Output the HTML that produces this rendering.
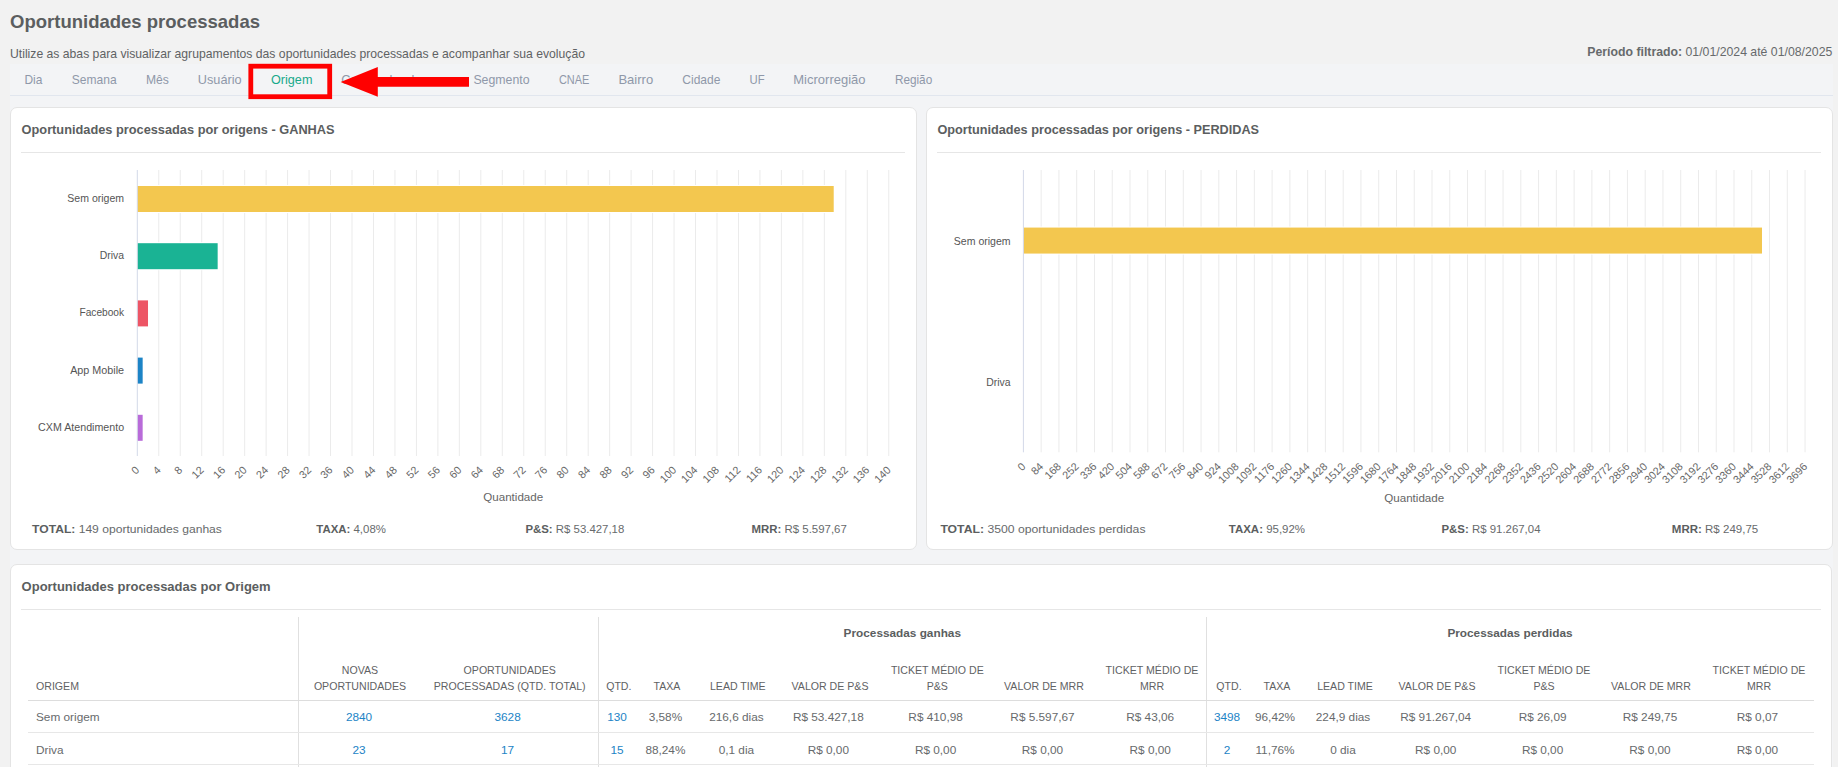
<!DOCTYPE html>
<html><head><meta charset="utf-8"><title>Oportunidades processadas</title>
<style>
html,body{margin:0;padding:0;background:#f2f2f2;}
body{width:1838px;height:767px;overflow:hidden;position:relative;font-family:"Liberation Sans", sans-serif;}
svg{position:absolute;left:0;top:0;display:block;}
svg text{font-family:"Liberation Sans", sans-serif;}
</style></head>
<body>
<svg width="1838" height="767" viewBox="0 0 1838 767">
<rect x="10" y="64" width="1823" height="703" fill="#f3f4f6" />
<text x="10" y="27.8" font-size="18.2" fill="#5b5e60" font-weight="bold" text-anchor="start" textLength="250" lengthAdjust="spacingAndGlyphs" >Oportunidades processadas</text>
<text x="10" y="58" font-size="12.4" fill="#5f6264" font-weight="normal" text-anchor="start" textLength="575" lengthAdjust="spacingAndGlyphs" >Utilize as abas para visualizar agrupamentos das oportunidades processadas e acompanhar sua evolução</text>
<text x="1832.3" y="56.3" font-size="12.6" fill="#676a6c" text-anchor="end" textLength="245" lengthAdjust="spacingAndGlyphs"><tspan font-weight="bold">Período filtrado:</tspan> 01/01/2024 até 01/08/2025</text>
<text x="24.5" y="84.2" font-size="12.8" fill="#8f98a9" font-weight="normal" text-anchor="start" textLength="17.9" lengthAdjust="spacingAndGlyphs" >Dia</text>
<text x="71.8" y="84.2" font-size="12.8" fill="#8f98a9" font-weight="normal" text-anchor="start" textLength="44.8" lengthAdjust="spacingAndGlyphs" >Semana</text>
<text x="145.9" y="84.2" font-size="12.8" fill="#8f98a9" font-weight="normal" text-anchor="start" textLength="22.9" lengthAdjust="spacingAndGlyphs" >Mês</text>
<text x="197.8" y="84.2" font-size="12.8" fill="#8f98a9" font-weight="normal" text-anchor="start" textLength="43.8" lengthAdjust="spacingAndGlyphs" >Usuário</text>
<text x="271" y="84.2" font-size="12.8" fill="#18a98b" font-weight="normal" text-anchor="start" textLength="41.4" lengthAdjust="spacingAndGlyphs" >Origem</text>
<text x="341.2" y="84.2" font-size="12.8" fill="#8f98a9" font-weight="normal" text-anchor="start" textLength="110.8" lengthAdjust="spacingAndGlyphs" >Campanha de usos</text>
<text x="473.4" y="84.2" font-size="12.8" fill="#8f98a9" font-weight="normal" text-anchor="start" textLength="56.1" lengthAdjust="spacingAndGlyphs" >Segmento</text>
<text x="558.9" y="84.2" font-size="12.8" fill="#8f98a9" font-weight="normal" text-anchor="start" textLength="30.4" lengthAdjust="spacingAndGlyphs" >CNAE</text>
<text x="618.4" y="84.2" font-size="12.8" fill="#8f98a9" font-weight="normal" text-anchor="start" textLength="34.8" lengthAdjust="spacingAndGlyphs" >Bairro</text>
<text x="682.3" y="84.2" font-size="12.8" fill="#8f98a9" font-weight="normal" text-anchor="start" textLength="38.1" lengthAdjust="spacingAndGlyphs" >Cidade</text>
<text x="749.5" y="84.2" font-size="12.8" fill="#8f98a9" font-weight="normal" text-anchor="start" textLength="15.1" lengthAdjust="spacingAndGlyphs" >UF</text>
<text x="793.3" y="84.2" font-size="12.8" fill="#8f98a9" font-weight="normal" text-anchor="start" textLength="72.2" lengthAdjust="spacingAndGlyphs" >Microrregião</text>
<text x="894.9" y="84.2" font-size="12.8" fill="#8f98a9" font-weight="normal" text-anchor="start" textLength="37.3" lengthAdjust="spacingAndGlyphs" >Região</text>
<rect x="10" y="95" width="1823" height="1" fill="#e1e6ee"/>
<rect x="10.5" y="107.5" width="906" height="442" rx="6.5" ry="6.5" fill="#ffffff" stroke="#e4e4e4" stroke-width="1"/>
<rect x="926.5" y="107.5" width="906" height="442" rx="6.5" ry="6.5" fill="#ffffff" stroke="#e4e4e4" stroke-width="1"/>
<rect x="10.5" y="564.5" width="1821" height="259" rx="6.5" ry="6.5" fill="#ffffff" stroke="#e4e4e4" stroke-width="1"/>
<text x="21.6" y="133.8" font-size="12.6" fill="#5b5e60" font-weight="bold" text-anchor="start" textLength="313" lengthAdjust="spacingAndGlyphs" >Oportunidades processadas por origens - GANHAS</text>
<rect x="21" y="152" width="884" height="1" fill="#e6e6e6"/>
<text x="937.4" y="133.8" font-size="12.6" fill="#5b5e60" font-weight="bold" text-anchor="start" textLength="321.7" lengthAdjust="spacingAndGlyphs" >Oportunidades processadas por origens - PERDIDAS</text>
<rect x="937" y="152" width="884" height="1" fill="#e6e6e6"/>
<rect x="158.27" y="170" width="1" height="286" fill="#ebebeb"/>
<rect x="179.74" y="170" width="1" height="286" fill="#ebebeb"/>
<rect x="201.21" y="170" width="1" height="286" fill="#ebebeb"/>
<rect x="222.68" y="170" width="1" height="286" fill="#ebebeb"/>
<rect x="244.15" y="170" width="1" height="286" fill="#ebebeb"/>
<rect x="265.62" y="170" width="1" height="286" fill="#ebebeb"/>
<rect x="287.09" y="170" width="1" height="286" fill="#ebebeb"/>
<rect x="308.56" y="170" width="1" height="286" fill="#ebebeb"/>
<rect x="330.03" y="170" width="1" height="286" fill="#ebebeb"/>
<rect x="351.5" y="170" width="1" height="286" fill="#ebebeb"/>
<rect x="372.97" y="170" width="1" height="286" fill="#ebebeb"/>
<rect x="394.44" y="170" width="1" height="286" fill="#ebebeb"/>
<rect x="415.91" y="170" width="1" height="286" fill="#ebebeb"/>
<rect x="437.38" y="170" width="1" height="286" fill="#ebebeb"/>
<rect x="458.85" y="170" width="1" height="286" fill="#ebebeb"/>
<rect x="480.32" y="170" width="1" height="286" fill="#ebebeb"/>
<rect x="501.79" y="170" width="1" height="286" fill="#ebebeb"/>
<rect x="523.26" y="170" width="1" height="286" fill="#ebebeb"/>
<rect x="544.73" y="170" width="1" height="286" fill="#ebebeb"/>
<rect x="566.2" y="170" width="1" height="286" fill="#ebebeb"/>
<rect x="587.67" y="170" width="1" height="286" fill="#ebebeb"/>
<rect x="609.14" y="170" width="1" height="286" fill="#ebebeb"/>
<rect x="630.61" y="170" width="1" height="286" fill="#ebebeb"/>
<rect x="652.08" y="170" width="1" height="286" fill="#ebebeb"/>
<rect x="673.55" y="170" width="1" height="286" fill="#ebebeb"/>
<rect x="695.02" y="170" width="1" height="286" fill="#ebebeb"/>
<rect x="716.49" y="170" width="1" height="286" fill="#ebebeb"/>
<rect x="737.96" y="170" width="1" height="286" fill="#ebebeb"/>
<rect x="759.43" y="170" width="1" height="286" fill="#ebebeb"/>
<rect x="780.9" y="170" width="1" height="286" fill="#ebebeb"/>
<rect x="802.37" y="170" width="1" height="286" fill="#ebebeb"/>
<rect x="823.84" y="170" width="1" height="286" fill="#ebebeb"/>
<rect x="845.31" y="170" width="1" height="286" fill="#ebebeb"/>
<rect x="866.78" y="170" width="1" height="286" fill="#ebebeb"/>
<rect x="888.25" y="170" width="1" height="286" fill="#ebebeb"/>
<rect x="137.8" y="185.0" width="697.41" height="28" fill="#ffffff" />
<rect x="137.3" y="186.0" width="696.41" height="26" fill="#f3c74f" />
<text x="124.1" y="202.0" font-size="10.2" fill="#555555" font-weight="normal" text-anchor="end" textLength="56.8" lengthAdjust="spacingAndGlyphs" >Sem origem</text>
<rect x="137.8" y="242.2" width="81.36" height="28" fill="#ffffff" />
<rect x="137.3" y="243.2" width="80.36" height="26" fill="#1ab394" />
<text x="124.1" y="259.2" font-size="10.2" fill="#555555" font-weight="normal" text-anchor="end" textLength="24.3" lengthAdjust="spacingAndGlyphs" >Driva</text>
<rect x="137.8" y="299.4" width="11.71" height="28" fill="#ffffff" />
<rect x="137.3" y="300.4" width="10.71" height="26" fill="#ed5565" />
<text x="124.1" y="316.4" font-size="10.2" fill="#555555" font-weight="normal" text-anchor="end" textLength="44.6" lengthAdjust="spacingAndGlyphs" >Facebook</text>
<rect x="137.8" y="356.6" width="6.36" height="28" fill="#ffffff" />
<rect x="137.3" y="357.6" width="5.36" height="26" fill="#1c84c6" />
<text x="124.1" y="373.6" font-size="10.2" fill="#555555" font-weight="normal" text-anchor="end" textLength="53.9" lengthAdjust="spacingAndGlyphs" >App Mobile</text>
<rect x="137.8" y="413.8" width="6.36" height="28" fill="#ffffff" />
<rect x="137.3" y="414.8" width="5.36" height="26" fill="#b96bd9" />
<text x="124.1" y="430.8" font-size="10.2" fill="#555555" font-weight="normal" text-anchor="end" textLength="86" lengthAdjust="spacingAndGlyphs" >CXM Atendimento</text>
<rect x="136.8" y="170" width="1" height="286" fill="#d3d9e8"/>
<text x="0" y="0" font-size="10.8" fill="#666666" text-anchor="end" dominant-baseline="central" transform="translate(137.30,468) rotate(-45)">0</text>
<text x="0" y="0" font-size="10.8" fill="#666666" text-anchor="end" dominant-baseline="central" transform="translate(158.77,468) rotate(-45)">4</text>
<text x="0" y="0" font-size="10.8" fill="#666666" text-anchor="end" dominant-baseline="central" transform="translate(180.24,468) rotate(-45)">8</text>
<text x="0" y="0" font-size="10.8" fill="#666666" text-anchor="end" dominant-baseline="central" transform="translate(201.71,468) rotate(-45)">12</text>
<text x="0" y="0" font-size="10.8" fill="#666666" text-anchor="end" dominant-baseline="central" transform="translate(223.18,468) rotate(-45)">16</text>
<text x="0" y="0" font-size="10.8" fill="#666666" text-anchor="end" dominant-baseline="central" transform="translate(244.65,468) rotate(-45)">20</text>
<text x="0" y="0" font-size="10.8" fill="#666666" text-anchor="end" dominant-baseline="central" transform="translate(266.12,468) rotate(-45)">24</text>
<text x="0" y="0" font-size="10.8" fill="#666666" text-anchor="end" dominant-baseline="central" transform="translate(287.59,468) rotate(-45)">28</text>
<text x="0" y="0" font-size="10.8" fill="#666666" text-anchor="end" dominant-baseline="central" transform="translate(309.06,468) rotate(-45)">32</text>
<text x="0" y="0" font-size="10.8" fill="#666666" text-anchor="end" dominant-baseline="central" transform="translate(330.53,468) rotate(-45)">36</text>
<text x="0" y="0" font-size="10.8" fill="#666666" text-anchor="end" dominant-baseline="central" transform="translate(352.00,468) rotate(-45)">40</text>
<text x="0" y="0" font-size="10.8" fill="#666666" text-anchor="end" dominant-baseline="central" transform="translate(373.47,468) rotate(-45)">44</text>
<text x="0" y="0" font-size="10.8" fill="#666666" text-anchor="end" dominant-baseline="central" transform="translate(394.94,468) rotate(-45)">48</text>
<text x="0" y="0" font-size="10.8" fill="#666666" text-anchor="end" dominant-baseline="central" transform="translate(416.41,468) rotate(-45)">52</text>
<text x="0" y="0" font-size="10.8" fill="#666666" text-anchor="end" dominant-baseline="central" transform="translate(437.88,468) rotate(-45)">56</text>
<text x="0" y="0" font-size="10.8" fill="#666666" text-anchor="end" dominant-baseline="central" transform="translate(459.35,468) rotate(-45)">60</text>
<text x="0" y="0" font-size="10.8" fill="#666666" text-anchor="end" dominant-baseline="central" transform="translate(480.82,468) rotate(-45)">64</text>
<text x="0" y="0" font-size="10.8" fill="#666666" text-anchor="end" dominant-baseline="central" transform="translate(502.29,468) rotate(-45)">68</text>
<text x="0" y="0" font-size="10.8" fill="#666666" text-anchor="end" dominant-baseline="central" transform="translate(523.76,468) rotate(-45)">72</text>
<text x="0" y="0" font-size="10.8" fill="#666666" text-anchor="end" dominant-baseline="central" transform="translate(545.23,468) rotate(-45)">76</text>
<text x="0" y="0" font-size="10.8" fill="#666666" text-anchor="end" dominant-baseline="central" transform="translate(566.70,468) rotate(-45)">80</text>
<text x="0" y="0" font-size="10.8" fill="#666666" text-anchor="end" dominant-baseline="central" transform="translate(588.17,468) rotate(-45)">84</text>
<text x="0" y="0" font-size="10.8" fill="#666666" text-anchor="end" dominant-baseline="central" transform="translate(609.64,468) rotate(-45)">88</text>
<text x="0" y="0" font-size="10.8" fill="#666666" text-anchor="end" dominant-baseline="central" transform="translate(631.11,468) rotate(-45)">92</text>
<text x="0" y="0" font-size="10.8" fill="#666666" text-anchor="end" dominant-baseline="central" transform="translate(652.58,468) rotate(-45)">96</text>
<text x="0" y="0" font-size="10.8" fill="#666666" text-anchor="end" dominant-baseline="central" transform="translate(674.05,468) rotate(-45)">100</text>
<text x="0" y="0" font-size="10.8" fill="#666666" text-anchor="end" dominant-baseline="central" transform="translate(695.52,468) rotate(-45)">104</text>
<text x="0" y="0" font-size="10.8" fill="#666666" text-anchor="end" dominant-baseline="central" transform="translate(716.99,468) rotate(-45)">108</text>
<text x="0" y="0" font-size="10.8" fill="#666666" text-anchor="end" dominant-baseline="central" transform="translate(738.46,468) rotate(-45)">112</text>
<text x="0" y="0" font-size="10.8" fill="#666666" text-anchor="end" dominant-baseline="central" transform="translate(759.93,468) rotate(-45)">116</text>
<text x="0" y="0" font-size="10.8" fill="#666666" text-anchor="end" dominant-baseline="central" transform="translate(781.40,468) rotate(-45)">120</text>
<text x="0" y="0" font-size="10.8" fill="#666666" text-anchor="end" dominant-baseline="central" transform="translate(802.87,468) rotate(-45)">124</text>
<text x="0" y="0" font-size="10.8" fill="#666666" text-anchor="end" dominant-baseline="central" transform="translate(824.34,468) rotate(-45)">128</text>
<text x="0" y="0" font-size="10.8" fill="#666666" text-anchor="end" dominant-baseline="central" transform="translate(845.81,468) rotate(-45)">132</text>
<text x="0" y="0" font-size="10.8" fill="#666666" text-anchor="end" dominant-baseline="central" transform="translate(867.28,468) rotate(-45)">136</text>
<text x="0" y="0" font-size="10.8" fill="#666666" text-anchor="end" dominant-baseline="central" transform="translate(888.75,468) rotate(-45)">140</text>
<text x="513.2" y="500.9" font-size="11.6" fill="#666666" font-weight="normal" text-anchor="middle" >Quantidade</text>
<rect x="1040.66" y="170" width="1" height="282.3" fill="#ebebeb"/>
<rect x="1058.43" y="170" width="1" height="282.3" fill="#ebebeb"/>
<rect x="1076.19" y="170" width="1" height="282.3" fill="#ebebeb"/>
<rect x="1093.96" y="170" width="1" height="282.3" fill="#ebebeb"/>
<rect x="1111.72" y="170" width="1" height="282.3" fill="#ebebeb"/>
<rect x="1129.49" y="170" width="1" height="282.3" fill="#ebebeb"/>
<rect x="1147.25" y="170" width="1" height="282.3" fill="#ebebeb"/>
<rect x="1165.02" y="170" width="1" height="282.3" fill="#ebebeb"/>
<rect x="1182.78" y="170" width="1" height="282.3" fill="#ebebeb"/>
<rect x="1200.55" y="170" width="1" height="282.3" fill="#ebebeb"/>
<rect x="1218.32" y="170" width="1" height="282.3" fill="#ebebeb"/>
<rect x="1236.08" y="170" width="1" height="282.3" fill="#ebebeb"/>
<rect x="1253.85" y="170" width="1" height="282.3" fill="#ebebeb"/>
<rect x="1271.61" y="170" width="1" height="282.3" fill="#ebebeb"/>
<rect x="1289.38" y="170" width="1" height="282.3" fill="#ebebeb"/>
<rect x="1307.14" y="170" width="1" height="282.3" fill="#ebebeb"/>
<rect x="1324.9" y="170" width="1" height="282.3" fill="#ebebeb"/>
<rect x="1342.67" y="170" width="1" height="282.3" fill="#ebebeb"/>
<rect x="1360.43" y="170" width="1" height="282.3" fill="#ebebeb"/>
<rect x="1378.2" y="170" width="1" height="282.3" fill="#ebebeb"/>
<rect x="1395.96" y="170" width="1" height="282.3" fill="#ebebeb"/>
<rect x="1413.73" y="170" width="1" height="282.3" fill="#ebebeb"/>
<rect x="1431.49" y="170" width="1" height="282.3" fill="#ebebeb"/>
<rect x="1449.26" y="170" width="1" height="282.3" fill="#ebebeb"/>
<rect x="1467.03" y="170" width="1" height="282.3" fill="#ebebeb"/>
<rect x="1484.79" y="170" width="1" height="282.3" fill="#ebebeb"/>
<rect x="1502.56" y="170" width="1" height="282.3" fill="#ebebeb"/>
<rect x="1520.32" y="170" width="1" height="282.3" fill="#ebebeb"/>
<rect x="1538.09" y="170" width="1" height="282.3" fill="#ebebeb"/>
<rect x="1555.85" y="170" width="1" height="282.3" fill="#ebebeb"/>
<rect x="1573.62" y="170" width="1" height="282.3" fill="#ebebeb"/>
<rect x="1591.38" y="170" width="1" height="282.3" fill="#ebebeb"/>
<rect x="1609.14" y="170" width="1" height="282.3" fill="#ebebeb"/>
<rect x="1626.91" y="170" width="1" height="282.3" fill="#ebebeb"/>
<rect x="1644.67" y="170" width="1" height="282.3" fill="#ebebeb"/>
<rect x="1662.44" y="170" width="1" height="282.3" fill="#ebebeb"/>
<rect x="1680.2" y="170" width="1" height="282.3" fill="#ebebeb"/>
<rect x="1697.97" y="170" width="1" height="282.3" fill="#ebebeb"/>
<rect x="1715.74" y="170" width="1" height="282.3" fill="#ebebeb"/>
<rect x="1733.5" y="170" width="1" height="282.3" fill="#ebebeb"/>
<rect x="1751.26" y="170" width="1" height="282.3" fill="#ebebeb"/>
<rect x="1769.03" y="170" width="1" height="282.3" fill="#ebebeb"/>
<rect x="1786.8" y="170" width="1" height="282.3" fill="#ebebeb"/>
<rect x="1804.56" y="170" width="1" height="282.3" fill="#ebebeb"/>
<rect x="1023.9" y="226.57" width="739.59" height="28" fill="#ffffff" />
<rect x="1023.4" y="227.57" width="738.59" height="26" fill="#f3c74f" />
<text x="1010.6" y="244.88" font-size="10.2" fill="#555555" font-weight="normal" text-anchor="end" textLength="56.8" lengthAdjust="spacingAndGlyphs" >Sem origem</text>
<rect x="1023.9" y="367.73" width="0.21999999999999997" height="28" fill="#ffffff" />
<rect x="1023.4" y="368.73" width="-0.78" height="26" fill="#1ab394" />
<text x="1010.6" y="386.03" font-size="10.2" fill="#555555" font-weight="normal" text-anchor="end" textLength="24.3" lengthAdjust="spacingAndGlyphs" >Driva</text>
<rect x="1022.9" y="170" width="1" height="282.3" fill="#d3d9e8"/>
<text x="0" y="0" font-size="10.8" fill="#666666" text-anchor="end" dominant-baseline="central" transform="translate(1023.40,464.3) rotate(-45)">0</text>
<text x="0" y="0" font-size="10.8" fill="#666666" text-anchor="end" dominant-baseline="central" transform="translate(1041.16,464.3) rotate(-45)">84</text>
<text x="0" y="0" font-size="10.8" fill="#666666" text-anchor="end" dominant-baseline="central" transform="translate(1058.93,464.3) rotate(-45)">168</text>
<text x="0" y="0" font-size="10.8" fill="#666666" text-anchor="end" dominant-baseline="central" transform="translate(1076.69,464.3) rotate(-45)">252</text>
<text x="0" y="0" font-size="10.8" fill="#666666" text-anchor="end" dominant-baseline="central" transform="translate(1094.46,464.3) rotate(-45)">336</text>
<text x="0" y="0" font-size="10.8" fill="#666666" text-anchor="end" dominant-baseline="central" transform="translate(1112.22,464.3) rotate(-45)">420</text>
<text x="0" y="0" font-size="10.8" fill="#666666" text-anchor="end" dominant-baseline="central" transform="translate(1129.99,464.3) rotate(-45)">504</text>
<text x="0" y="0" font-size="10.8" fill="#666666" text-anchor="end" dominant-baseline="central" transform="translate(1147.75,464.3) rotate(-45)">588</text>
<text x="0" y="0" font-size="10.8" fill="#666666" text-anchor="end" dominant-baseline="central" transform="translate(1165.52,464.3) rotate(-45)">672</text>
<text x="0" y="0" font-size="10.8" fill="#666666" text-anchor="end" dominant-baseline="central" transform="translate(1183.28,464.3) rotate(-45)">756</text>
<text x="0" y="0" font-size="10.8" fill="#666666" text-anchor="end" dominant-baseline="central" transform="translate(1201.05,464.3) rotate(-45)">840</text>
<text x="0" y="0" font-size="10.8" fill="#666666" text-anchor="end" dominant-baseline="central" transform="translate(1218.82,464.3) rotate(-45)">924</text>
<text x="0" y="0" font-size="10.8" fill="#666666" text-anchor="end" dominant-baseline="central" transform="translate(1236.58,464.3) rotate(-45)">1008</text>
<text x="0" y="0" font-size="10.8" fill="#666666" text-anchor="end" dominant-baseline="central" transform="translate(1254.35,464.3) rotate(-45)">1092</text>
<text x="0" y="0" font-size="10.8" fill="#666666" text-anchor="end" dominant-baseline="central" transform="translate(1272.11,464.3) rotate(-45)">1176</text>
<text x="0" y="0" font-size="10.8" fill="#666666" text-anchor="end" dominant-baseline="central" transform="translate(1289.88,464.3) rotate(-45)">1260</text>
<text x="0" y="0" font-size="10.8" fill="#666666" text-anchor="end" dominant-baseline="central" transform="translate(1307.64,464.3) rotate(-45)">1344</text>
<text x="0" y="0" font-size="10.8" fill="#666666" text-anchor="end" dominant-baseline="central" transform="translate(1325.40,464.3) rotate(-45)">1428</text>
<text x="0" y="0" font-size="10.8" fill="#666666" text-anchor="end" dominant-baseline="central" transform="translate(1343.17,464.3) rotate(-45)">1512</text>
<text x="0" y="0" font-size="10.8" fill="#666666" text-anchor="end" dominant-baseline="central" transform="translate(1360.93,464.3) rotate(-45)">1596</text>
<text x="0" y="0" font-size="10.8" fill="#666666" text-anchor="end" dominant-baseline="central" transform="translate(1378.70,464.3) rotate(-45)">1680</text>
<text x="0" y="0" font-size="10.8" fill="#666666" text-anchor="end" dominant-baseline="central" transform="translate(1396.46,464.3) rotate(-45)">1764</text>
<text x="0" y="0" font-size="10.8" fill="#666666" text-anchor="end" dominant-baseline="central" transform="translate(1414.23,464.3) rotate(-45)">1848</text>
<text x="0" y="0" font-size="10.8" fill="#666666" text-anchor="end" dominant-baseline="central" transform="translate(1431.99,464.3) rotate(-45)">1932</text>
<text x="0" y="0" font-size="10.8" fill="#666666" text-anchor="end" dominant-baseline="central" transform="translate(1449.76,464.3) rotate(-45)">2016</text>
<text x="0" y="0" font-size="10.8" fill="#666666" text-anchor="end" dominant-baseline="central" transform="translate(1467.53,464.3) rotate(-45)">2100</text>
<text x="0" y="0" font-size="10.8" fill="#666666" text-anchor="end" dominant-baseline="central" transform="translate(1485.29,464.3) rotate(-45)">2184</text>
<text x="0" y="0" font-size="10.8" fill="#666666" text-anchor="end" dominant-baseline="central" transform="translate(1503.06,464.3) rotate(-45)">2268</text>
<text x="0" y="0" font-size="10.8" fill="#666666" text-anchor="end" dominant-baseline="central" transform="translate(1520.82,464.3) rotate(-45)">2352</text>
<text x="0" y="0" font-size="10.8" fill="#666666" text-anchor="end" dominant-baseline="central" transform="translate(1538.59,464.3) rotate(-45)">2436</text>
<text x="0" y="0" font-size="10.8" fill="#666666" text-anchor="end" dominant-baseline="central" transform="translate(1556.35,464.3) rotate(-45)">2520</text>
<text x="0" y="0" font-size="10.8" fill="#666666" text-anchor="end" dominant-baseline="central" transform="translate(1574.12,464.3) rotate(-45)">2604</text>
<text x="0" y="0" font-size="10.8" fill="#666666" text-anchor="end" dominant-baseline="central" transform="translate(1591.88,464.3) rotate(-45)">2688</text>
<text x="0" y="0" font-size="10.8" fill="#666666" text-anchor="end" dominant-baseline="central" transform="translate(1609.64,464.3) rotate(-45)">2772</text>
<text x="0" y="0" font-size="10.8" fill="#666666" text-anchor="end" dominant-baseline="central" transform="translate(1627.41,464.3) rotate(-45)">2856</text>
<text x="0" y="0" font-size="10.8" fill="#666666" text-anchor="end" dominant-baseline="central" transform="translate(1645.17,464.3) rotate(-45)">2940</text>
<text x="0" y="0" font-size="10.8" fill="#666666" text-anchor="end" dominant-baseline="central" transform="translate(1662.94,464.3) rotate(-45)">3024</text>
<text x="0" y="0" font-size="10.8" fill="#666666" text-anchor="end" dominant-baseline="central" transform="translate(1680.70,464.3) rotate(-45)">3108</text>
<text x="0" y="0" font-size="10.8" fill="#666666" text-anchor="end" dominant-baseline="central" transform="translate(1698.47,464.3) rotate(-45)">3192</text>
<text x="0" y="0" font-size="10.8" fill="#666666" text-anchor="end" dominant-baseline="central" transform="translate(1716.24,464.3) rotate(-45)">3276</text>
<text x="0" y="0" font-size="10.8" fill="#666666" text-anchor="end" dominant-baseline="central" transform="translate(1734.00,464.3) rotate(-45)">3360</text>
<text x="0" y="0" font-size="10.8" fill="#666666" text-anchor="end" dominant-baseline="central" transform="translate(1751.76,464.3) rotate(-45)">3444</text>
<text x="0" y="0" font-size="10.8" fill="#666666" text-anchor="end" dominant-baseline="central" transform="translate(1769.53,464.3) rotate(-45)">3528</text>
<text x="0" y="0" font-size="10.8" fill="#666666" text-anchor="end" dominant-baseline="central" transform="translate(1787.30,464.3) rotate(-45)">3612</text>
<text x="0" y="0" font-size="10.8" fill="#666666" text-anchor="end" dominant-baseline="central" transform="translate(1805.06,464.3) rotate(-45)">3696</text>
<text x="1414.2" y="501.5" font-size="11.6" fill="#666666" font-weight="normal" text-anchor="middle" >Quantidade</text>
<text x="32.1" y="533.4" font-size="11.7" fill="#676a6c" textLength="189.8" lengthAdjust="spacingAndGlyphs"><tspan font-weight="bold" fill="#5b5e60">TOTAL:</tspan> 149 oportunidades ganhas</text>
<text x="316.3" y="533.4" font-size="11.7" fill="#676a6c" textLength="69.6" lengthAdjust="spacingAndGlyphs"><tspan font-weight="bold" fill="#5b5e60">TAXA:</tspan> 4,08%</text>
<text x="525.4" y="533.4" font-size="11.7" fill="#676a6c" textLength="98.9" lengthAdjust="spacingAndGlyphs"><tspan font-weight="bold" fill="#5b5e60">P&amp;S:</tspan> R$ 53.427,18</text>
<text x="751.5" y="533.4" font-size="11.7" fill="#676a6c" textLength="95.3" lengthAdjust="spacingAndGlyphs"><tspan font-weight="bold" fill="#5b5e60">MRR:</tspan> R$ 5.597,67</text>
<text x="940.4" y="533.4" font-size="11.7" fill="#676a6c" textLength="205.1" lengthAdjust="spacingAndGlyphs"><tspan font-weight="bold" fill="#5b5e60">TOTAL:</tspan> 3500 oportunidades perdidas</text>
<text x="1228.8" y="533.4" font-size="11.7" fill="#676a6c" textLength="76.2" lengthAdjust="spacingAndGlyphs"><tspan font-weight="bold" fill="#5b5e60">TAXA:</tspan> 95,92%</text>
<text x="1441.5" y="533.4" font-size="11.7" fill="#676a6c" textLength="99.0" lengthAdjust="spacingAndGlyphs"><tspan font-weight="bold" fill="#5b5e60">P&amp;S:</tspan> R$ 91.267,04</text>
<text x="1671.8" y="533.4" font-size="11.7" fill="#676a6c" textLength="86.4" lengthAdjust="spacingAndGlyphs"><tspan font-weight="bold" fill="#5b5e60">MRR:</tspan> R$ 249,75</text>
<text x="21.6" y="591.1" font-size="12.6" fill="#5b5e60" font-weight="bold" text-anchor="start" textLength="249" lengthAdjust="spacingAndGlyphs" >Oportunidades processadas por Origem</text>
<rect x="21" y="609" width="1800" height="1" fill="#e6e6e6"/>
<rect x="298" y="617" width="1" height="150" fill="#e0e0e0"/>
<rect x="598" y="617" width="1" height="150" fill="#e0e0e0"/>
<rect x="1206" y="617" width="1" height="150" fill="#e0e0e0"/>
<rect x="28" y="700" width="1786" height="1" fill="#dddddd"/>
<rect x="28" y="732" width="1786" height="1" fill="#e7e7e7"/>
<rect x="28" y="764" width="1786" height="1" fill="#e7e7e7"/>
<text x="902.3" y="637" font-size="11.8" fill="#5b5e60" font-weight="bold" text-anchor="middle" >Processadas ganhas</text>
<text x="1510" y="637" font-size="11.8" fill="#5b5e60" font-weight="bold" text-anchor="middle" >Processadas perdidas</text>
<text x="36" y="690.3" font-size="10.6" fill="#5f6264" font-weight="normal" text-anchor="start" >ORIGEM</text>
<text x="360" y="674.1" font-size="10.6" fill="#5f6264" font-weight="normal" text-anchor="middle" >NOVAS</text>
<text x="360" y="690.3" font-size="10.6" fill="#5f6264" font-weight="normal" text-anchor="middle" >OPORTUNIDADES</text>
<text x="509.7" y="674.1" font-size="10.6" fill="#5f6264" font-weight="normal" text-anchor="middle" >OPORTUNIDADES</text>
<text x="509.7" y="690.3" font-size="10.6" fill="#5f6264" font-weight="normal" text-anchor="middle" >PROCESSADAS (QTD. TOTAL)</text>
<text x="618.8" y="690.3" font-size="10.6" fill="#5f6264" font-weight="normal" text-anchor="middle" >QTD.</text>
<text x="667" y="690.3" font-size="10.6" fill="#5f6264" font-weight="normal" text-anchor="middle" >TAXA</text>
<text x="737.8" y="690.3" font-size="10.6" fill="#5f6264" font-weight="normal" text-anchor="middle" >LEAD TIME</text>
<text x="830" y="690.3" font-size="10.6" fill="#5f6264" font-weight="normal" text-anchor="middle" >VALOR DE P&amp;S</text>
<text x="937.3" y="674.1" font-size="10.6" fill="#5f6264" font-weight="normal" text-anchor="middle" >TICKET MÉDIO DE</text>
<text x="937.3" y="690.3" font-size="10.6" fill="#5f6264" font-weight="normal" text-anchor="middle" >P&amp;S</text>
<text x="1044" y="690.3" font-size="10.6" fill="#5f6264" font-weight="normal" text-anchor="middle" >VALOR DE MRR</text>
<text x="1152" y="674.1" font-size="10.6" fill="#5f6264" font-weight="normal" text-anchor="middle" >TICKET MÉDIO DE</text>
<text x="1152" y="690.3" font-size="10.6" fill="#5f6264" font-weight="normal" text-anchor="middle" >MRR</text>
<text x="1229" y="690.3" font-size="10.6" fill="#5f6264" font-weight="normal" text-anchor="middle" >QTD.</text>
<text x="1277" y="690.3" font-size="10.6" fill="#5f6264" font-weight="normal" text-anchor="middle" >TAXA</text>
<text x="1345" y="690.3" font-size="10.6" fill="#5f6264" font-weight="normal" text-anchor="middle" >LEAD TIME</text>
<text x="1437" y="690.3" font-size="10.6" fill="#5f6264" font-weight="normal" text-anchor="middle" >VALOR DE P&amp;S</text>
<text x="1544" y="674.1" font-size="10.6" fill="#5f6264" font-weight="normal" text-anchor="middle" >TICKET MÉDIO DE</text>
<text x="1544" y="690.3" font-size="10.6" fill="#5f6264" font-weight="normal" text-anchor="middle" >P&amp;S</text>
<text x="1651" y="690.3" font-size="10.6" fill="#5f6264" font-weight="normal" text-anchor="middle" >VALOR DE MRR</text>
<text x="1759" y="674.1" font-size="10.6" fill="#5f6264" font-weight="normal" text-anchor="middle" >TICKET MÉDIO DE</text>
<text x="1759" y="690.3" font-size="10.6" fill="#5f6264" font-weight="normal" text-anchor="middle" >MRR</text>
<text x="36" y="721.3" font-size="11.8" fill="#676a6c" font-weight="normal" text-anchor="start" >Sem origem</text>
<text x="359" y="721.3" font-size="11.8" fill="#1c84c6" font-weight="normal" text-anchor="middle" >2840</text>
<text x="507.6" y="721.3" font-size="11.8" fill="#1c84c6" font-weight="normal" text-anchor="middle" >3628</text>
<text x="617" y="721.3" font-size="11.8" fill="#1c84c6" font-weight="normal" text-anchor="middle" >130</text>
<text x="665.4" y="721.3" font-size="11.8" fill="#676a6c" font-weight="normal" text-anchor="middle" >3,58%</text>
<text x="736.4" y="721.3" font-size="11.8" fill="#676a6c" font-weight="normal" text-anchor="middle" >216,6 dias</text>
<text x="828.3" y="721.3" font-size="11.8" fill="#676a6c" font-weight="normal" text-anchor="middle" >R$ 53.427,18</text>
<text x="935.6" y="721.3" font-size="11.8" fill="#676a6c" font-weight="normal" text-anchor="middle" >R$ 410,98</text>
<text x="1042.5" y="721.3" font-size="11.8" fill="#676a6c" font-weight="normal" text-anchor="middle" >R$ 5.597,67</text>
<text x="1150.2" y="721.3" font-size="11.8" fill="#676a6c" font-weight="normal" text-anchor="middle" >R$ 43,06</text>
<text x="1227" y="721.3" font-size="11.8" fill="#1c84c6" font-weight="normal" text-anchor="middle" >3498</text>
<text x="1275" y="721.3" font-size="11.8" fill="#676a6c" font-weight="normal" text-anchor="middle" >96,42%</text>
<text x="1343" y="721.3" font-size="11.8" fill="#676a6c" font-weight="normal" text-anchor="middle" >224,9 dias</text>
<text x="1435.7" y="721.3" font-size="11.8" fill="#676a6c" font-weight="normal" text-anchor="middle" >R$ 91.267,04</text>
<text x="1542.6" y="721.3" font-size="11.8" fill="#676a6c" font-weight="normal" text-anchor="middle" >R$ 26,09</text>
<text x="1650" y="721.3" font-size="11.8" fill="#676a6c" font-weight="normal" text-anchor="middle" >R$ 249,75</text>
<text x="1757.4" y="721.3" font-size="11.8" fill="#676a6c" font-weight="normal" text-anchor="middle" >R$ 0,07</text>
<text x="36" y="754.4" font-size="11.8" fill="#676a6c" font-weight="normal" text-anchor="start" >Driva</text>
<text x="359" y="754.4" font-size="11.8" fill="#1c84c6" font-weight="normal" text-anchor="middle" >23</text>
<text x="507.6" y="754.4" font-size="11.8" fill="#1c84c6" font-weight="normal" text-anchor="middle" >17</text>
<text x="617" y="754.4" font-size="11.8" fill="#1c84c6" font-weight="normal" text-anchor="middle" >15</text>
<text x="665.4" y="754.4" font-size="11.8" fill="#676a6c" font-weight="normal" text-anchor="middle" >88,24%</text>
<text x="736.4" y="754.4" font-size="11.8" fill="#676a6c" font-weight="normal" text-anchor="middle" >0,1 dia</text>
<text x="828.3" y="754.4" font-size="11.8" fill="#676a6c" font-weight="normal" text-anchor="middle" >R$ 0,00</text>
<text x="935.6" y="754.4" font-size="11.8" fill="#676a6c" font-weight="normal" text-anchor="middle" >R$ 0,00</text>
<text x="1042.5" y="754.4" font-size="11.8" fill="#676a6c" font-weight="normal" text-anchor="middle" >R$ 0,00</text>
<text x="1150.2" y="754.4" font-size="11.8" fill="#676a6c" font-weight="normal" text-anchor="middle" >R$ 0,00</text>
<text x="1227" y="754.4" font-size="11.8" fill="#1c84c6" font-weight="normal" text-anchor="middle" >2</text>
<text x="1275" y="754.4" font-size="11.8" fill="#676a6c" font-weight="normal" text-anchor="middle" >11,76%</text>
<text x="1343" y="754.4" font-size="11.8" fill="#676a6c" font-weight="normal" text-anchor="middle" >0 dia</text>
<text x="1435.7" y="754.4" font-size="11.8" fill="#676a6c" font-weight="normal" text-anchor="middle" >R$ 0,00</text>
<text x="1542.6" y="754.4" font-size="11.8" fill="#676a6c" font-weight="normal" text-anchor="middle" >R$ 0,00</text>
<text x="1650" y="754.4" font-size="11.8" fill="#676a6c" font-weight="normal" text-anchor="middle" >R$ 0,00</text>
<text x="1757.4" y="754.4" font-size="11.8" fill="#676a6c" font-weight="normal" text-anchor="middle" >R$ 0,00</text>
<rect x="250.8" y="66.2" width="78.9" height="30.5" fill="none" stroke="#ff0000" stroke-width="4.8"/>
<polygon points="340.6,82 377.8,66.9 377.8,76.9 469,76.9 469,86.7 377.8,86.7 377.8,96.7" fill="#ff0000"/>
</svg>
</body></html>
